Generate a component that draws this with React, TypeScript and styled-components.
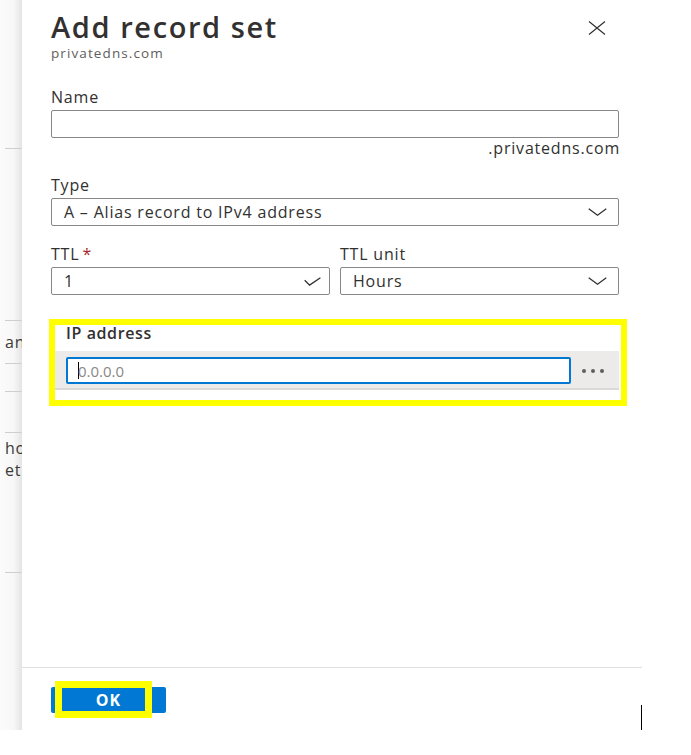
import React from "react";
import styled, { createGlobalStyle } from "styled-components";

const GlobalStyle = createGlobalStyle`
  html, body {
    margin: 0;
    padding: 0;
    background: #ffffff;
  }
  body {
    font-family: "Open Sans", "Noto Sans", sans-serif;
    color: #323130;
  }
  * { box-sizing: border-box; }
`;

const Page = styled.div`
  display: flex;
  width: 691px;
  height: 755px;
  background: #ffffff;
  overflow: hidden;
`;

/* ---------- background page strip on the left ---------- */
const Strip = styled.div`
  width: 22px;
  height: 730px;
  flex: none;
  display: flex;
  flex-direction: column;
  padding-left: 5px;
  overflow: hidden;
  background: linear-gradient(to right, #fbfbfb 0%, #f7f7f7 62%, #e4e4e4 100%);
`;

const StripSpace = styled.div<{ $h: number }>`
  height: ${(p) => p.$h}px;
  flex: none;
`;

const StripLine = styled.div`
  height: 1px;
  flex: none;
  background: #cfcfcf;
`;

const StripText = styled.div<{ $h: number }>`
  height: ${(p) => p.$h}px;
  flex: none;
  font-size: 16px;
  letter-spacing: 0.8px;
  line-height: 22px;
  color: #3b3a39;
  white-space: nowrap;
  display: flex;
  flex-direction: column;
  justify-content: center;
`;

/* ---------- panel ---------- */
const Panel = styled.div`
  width: 620px;
  height: 730px;
  flex: none;
  display: flex;
  flex-direction: column;
  background: #ffffff;
`;

const Body = styled.div`
  flex: 1;
  padding: 8px 23px 0 29px;
  display: flex;
  flex-direction: column;
`;

const Header = styled.div`
  display: flex;
  justify-content: space-between;
  align-items: flex-start;
`;

const TitleBlock = styled.div`
  display: flex;
  flex-direction: column;
`;

const Title = styled.h1`
  margin: 0;
  font-size: 29px;
  letter-spacing: 1.6px;
  line-height: 38px;
  font-weight: 600;
  color: #323130;
`;

const Subtitle = styled.div`
  font-size: 13.5px;
  letter-spacing: 1.1px;
  line-height: 14px;
  color: #605e5c;
`;

const CloseButton = styled.button`
  border: none;
  background: none;
  padding: 0;
  margin: 13px 13px 0 0;
  width: 18px;
  height: 14px;
  display: flex;
  cursor: pointer;
`;

const Field = styled.div<{ $top: number }>`
  display: flex;
  flex-direction: column;
  margin-top: ${(p) => p.$top}px;
`;

const Label = styled.div`
  font-size: 16px;
  letter-spacing: 0.8px;
  line-height: 20px;
  color: #323130;
  margin-bottom: 3px;
`;

const Required = styled.span`
  color: #a4262c;
  margin-left: 3px;
`;

const TextBox = styled.div`
  height: 28px;
  border: 1px solid #8a8886;
  border-radius: 2px;
  background: #ffffff;
`;

const Suffix = styled.div`
  font-size: 16px;
  letter-spacing: 0.8px;
  line-height: 20px;
  text-align: right;
  margin-right: -1px;
  color: #323130;
`;

const Select = styled.div<{ $pr: number }>`
  height: 28px;
  border: 1px solid #8a8886;
  border-radius: 2px;
  background: #ffffff;
  display: flex;
  align-items: center;
  justify-content: space-between;
  padding: 0 ${(p) => p.$pr}px 0 12px;
  font-size: 16px;
  letter-spacing: 0.8px;
  color: #323130;
`;

const Row = styled.div`
  display: grid;
  grid-template-columns: 1fr 1fr;
  column-gap: 10px;
  margin-top: 18px;
`;

const Highlight = styled.div`
  margin: 24px -8px 0 -2px;
  border: 6px solid #ffff00;
  display: flex;
  flex-direction: column;
`;

const StrongLabel = styled.div`
  font-size: 16px;
  letter-spacing: 0.6px;
  line-height: 20px;
  font-weight: 600;
  color: #323130;
  padding-left: 11px;
  margin-top: -2px;
`;

const InputBand = styled.div`
  margin: 8px 2px 10px 0;
  background: #edebe9;
  border-bottom: 2px solid #dcdad8;
  display: flex;
  align-items: center;
  padding: 6px 0 4px 11px;
`;

const FocusedInput = styled.div`
  flex: 1;
  height: 27px;
  border: 2px solid #0078d4;
  border-radius: 2px;
  background: #ffffff;
  display: flex;
  align-items: center;
  padding-left: 10px;
`;

const Caret = styled.span`
  width: 1px;
  height: 17px;
  background: #000000;
  flex: none;
`;

const Placeholder = styled.span`
  font-size: 15px;
  color: #8a8886;
  margin-left: -1px;
`;

const EllipsisButton = styled.button`
  width: 46px;
  height: 27px;
  border: none;
  background: none;
  padding: 0 3px 0 0;
  display: flex;
  align-items: center;
  justify-content: center;
  gap: 5px;
  margin-right: 2px;
`;

const Dot = styled.span`
  width: 4px;
  height: 4px;
  border-radius: 50%;
  background: #605e5c;
`;

const Footer = styled.div`
  height: 63px;
  border-top: 1px solid #e1dfdd;
  display: flex;
  align-items: flex-start;
  padding: 19px 0 0 29px;
`;

const PrimaryButton = styled.button`
  position: relative;
  width: 115px;
  height: 26px;
  border: none;
  border-radius: 2px;
  background: #0078d4;
  color: #ffffff;
  font-family: "Open Sans", "Noto Sans", sans-serif;
  font-size: 16px;
  letter-spacing: 1px;
  font-weight: 700;
  padding: 0;
  cursor: pointer;
`;

const ButtonHighlight = styled.span`
  position: absolute;
  left: 4px;
  top: -6px;
  width: 97px;
  height: 37px;
  border: 7px solid #ffff00;
`;

const EdgeMark = styled.div`
  margin-left: auto;
  align-self: flex-end;
  width: 1px;
  height: 25px;
  background: #000000;
`;

const Chevron = () => (
  <svg width="19" height="8" viewBox="0 0 19 8" fill="none">
    <path d="M0.7 0.7 L9.5 7.2 L18.3 0.7" stroke="#323130" strokeWidth="1.3" />
  </svg>
);

const Check = () => (
  <svg width="17" height="9" viewBox="0 0 17 9" fill="none">
    <path d="M0.7 3.2 L5.6 8.1 L16.4 0.7" stroke="#323130" strokeWidth="1.3" />
  </svg>
);

export default function App() {
  return (
    <>
      <GlobalStyle />
      <Page>
        <Strip>
          <StripSpace $h={148} />
          <StripLine />
          <StripSpace $h={171} />
          <StripLine />
          <StripText $h={42}>an</StripText>
          <StripLine />
          <StripSpace $h={27} />
          <StripLine />
          <StripSpace $h={40} />
          <StripLine />
          <StripText $h={52}>
            <span>ho</span>
            <span>et</span>
          </StripText>
          <StripSpace $h={87} />
          <StripLine />
        </Strip>

        <Panel>
          <Body>
            <Header>
              <TitleBlock>
                <Title>Add record set</Title>
                <Subtitle>privatedns.com</Subtitle>
              </TitleBlock>
              <CloseButton aria-label="Close">
                <svg width="18" height="14" viewBox="0 0 18 14" fill="none">
                  <path d="M1 0.5 L17 13.5 M17 0.5 L1 13.5" stroke="#323130" strokeWidth="1.2" />
                </svg>
              </CloseButton>
            </Header>

            <Field $top={27}>
              <Label>Name</Label>
              <TextBox />
              <Suffix>.privatedns.com</Suffix>
            </Field>

            <Field $top={17}>
              <Label>Type</Label>
              <Select $pr={11}>
                <span>A – Alias record to IPv4 address</span>
                <Chevron />
              </Select>
            </Field>

            <Row>
              <Field $top={0}>
                <Label>
                  TTL<Required>*</Required>
                </Label>
                <Select $pr={8}>
                  <span>1</span>
                  <Check />
                </Select>
              </Field>
              <Field $top={0}>
                <Label>TTL unit</Label>
                <Select $pr={11}>
                  <span>Hours</span>
                  <Chevron />
                </Select>
              </Field>
            </Row>

            <Highlight>
              <StrongLabel>IP address</StrongLabel>
              <InputBand>
                <FocusedInput>
                  <Caret />
                  <Placeholder>0.0.0.0</Placeholder>
                </FocusedInput>
                <EllipsisButton aria-label="More">
                  <Dot />
                  <Dot />
                  <Dot />
                </EllipsisButton>
              </InputBand>
            </Highlight>
          </Body>

          <Footer>
            <PrimaryButton>
              OK
              <ButtonHighlight />
            </PrimaryButton>
            <EdgeMark />
          </Footer>
        </Panel>
      </Page>
    </>
  );
}
